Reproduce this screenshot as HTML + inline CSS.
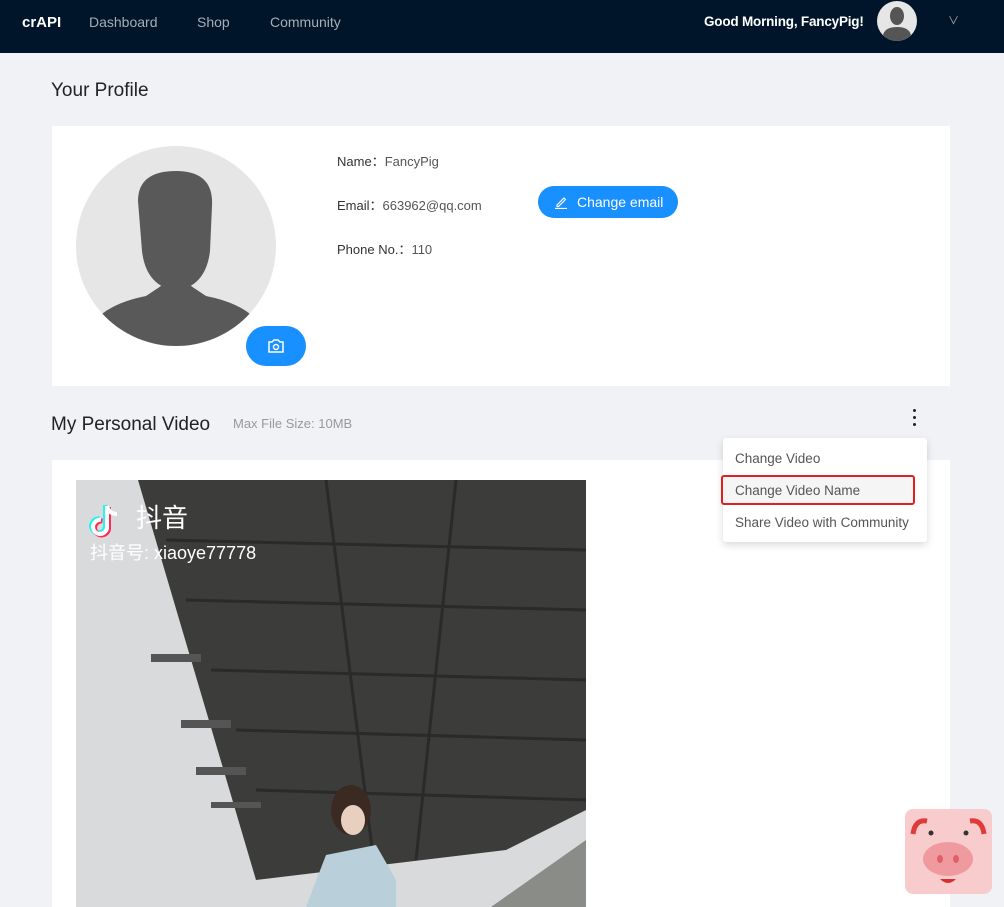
<!DOCTYPE html>
<html><head><meta charset="utf-8"><style>
*{margin:0;padding:0;box-sizing:border-box}
body{width:1004px;height:907px;overflow:hidden;background:#f0f2f5;font-family:"Liberation Sans","Noto Sans CJK SC",sans-serif;position:relative}
.nav{position:absolute;left:0;top:0;width:1004px;height:53px;background:#001529;color:#fff}
.nav span{position:absolute;top:14px;font-size:14px}
.a{position:absolute}
h2{position:absolute;font-size:19px;font-weight:normal;color:#222}
.card{position:absolute;background:#fff}
.lbl{position:absolute;font-size:13px;color:#333}
.lbl b{font-weight:normal;color:#555}
.btn{position:absolute;background:#1890ff;color:#fff;border-radius:16px}
.menu{position:absolute;left:723px;top:438px;width:204px;height:104px;background:#fff;box-shadow:0 3px 8px rgba(0,0,0,.15);border-radius:3px;font-size:13.5px;color:#555}
.menu div{position:absolute;left:12px}
</style></head><body>
<div class="nav">
<span style="left:22px;font-weight:bold;font-size:15px">crAPI</span>
<span style="left:89px;color:#a6adb4">Dashboard</span>
<span style="left:197px;color:#a6adb4">Shop</span>
<span style="left:270px;color:#a6adb4">Community</span>
<span style="left:704px;font-weight:bold;font-size:13.5px;letter-spacing:-0.2px">Good Morning, FancyPig!</span>
<svg class="a" style="left:877px;top:1px" width="40" height="40" viewBox="0 0 40 40"><circle cx="20" cy="20" r="20" fill="#e6e6e6"/><ellipse cx="20" cy="15" rx="7" ry="9" fill="#555"/><path d="M6 34 Q8 26 20 26 Q32 26 34 34 Q28 40 20 40 Q12 40 6 34Z" fill="#555"/></svg>
<span style="left:948px;top:12px;color:#aaa;font-size:11px">∨</span>
</div>
<h2 style="left:51px;top:80px">Your Profile</h2>
<div class="card" style="left:52px;top:126px;width:898px;height:260px"></div>
<svg class="a" style="left:76px;top:146px" width="200" height="200" viewBox="0 0 200 200"><circle cx="100" cy="100" r="100" fill="#e6e6e6"/><clipPath id="c"><circle cx="100" cy="100" r="100"/></clipPath><g clip-path="url(#c)" fill="#595959"><path d="M62 55 Q62 25 100 25 Q138 25 136 60 L134 105 Q130 140 100 145 Q70 140 66 105Z"/><path d="M10 190 Q20 160 70 150 L85 140 L115 140 L130 150 Q180 160 190 190 L190 200 L10 200Z"/></g></svg>
<div class="btn" style="left:246px;top:326px;width:60px;height:40px;border-radius:20px"><svg class="a" style="left:21px;top:12px" width="18" height="16" viewBox="0 0 18 16"><path d="M2 4h3l2-2h4l2 2h3v10H2z" fill="none" stroke="#fff" stroke-width="1.5"/><circle cx="9" cy="9" r="2.5" fill="none" stroke="#fff" stroke-width="1.5"/></svg></div>
<div class="lbl" style="left:337px;top:151px">Name：<b>FancyPig</b></div>
<div class="lbl" style="left:337px;top:195px">Email：<b>663962@qq.com</b></div>
<div class="lbl" style="left:337px;top:239px">Phone No.：<b>110</b></div>
<div class="btn" style="left:538px;top:186px;width:140px;height:32px;font-size:14px"><svg class="a" style="left:16px;top:9px" width="14" height="14" viewBox="0 0 14 14"><path d="M3 10 L10 3 L11.5 4.5 L4.5 11.5 L3 11.5Z M1 13.5h12" fill="none" stroke="#fff" stroke-width="1.2"/></svg><span class="a" style="left:39px;top:8px">Change email</span></div>
<h2 style="left:51px;top:414px">My Personal Video</h2>
<div class="a" style="left:233px;top:416px;font-size:13px;color:#999">Max File Size: 10MB</div>
<div class="a" style="left:913px;top:409px;width:4px;font-size:0"><div style="width:3px;height:3px;background:#222;border-radius:2px;margin-bottom:4px"></div><div style="width:3px;height:3px;background:#222;border-radius:2px;margin-bottom:4px"></div><div style="width:3px;height:3px;background:#222;border-radius:2px"></div></div>
<div class="card" style="left:52px;top:460px;width:898px;height:447px"></div>
<svg class="a" style="left:76px;top:480px" width="510" height="427" viewBox="0 0 510 427">
<rect width="510" height="427" fill="#d9dadc"/>
<path d="M62 0 L510 0 L510 330 L430 370 L180 400 Z" fill="#3c3d3a"/>
<g stroke="#222" stroke-width="3" opacity=".7"><path d="M90 60 L510 70"/><path d="M110 120 L510 130"/><path d="M135 190 L510 200"/><path d="M160 250 L510 260"/><path d="M180 310 L510 320"/><path d="M250 0 L300 400"/><path d="M380 0 L340 380"/></g>
<g fill="#555"><rect x="75" y="174" width="50" height="8"/><rect x="105" y="240" width="50" height="8"/><rect x="120" y="287" width="50" height="8"/><rect x="135" y="322" width="50" height="6"/></g>
<path d="M415 427 L510 360 L510 427Z" fill="#8a8c88"/>
<ellipse cx="275" cy="330" rx="20" ry="25" fill="#3a2a22"/>
<path d="M230 427 L250 375 L300 365 L320 400 L320 427Z" fill="#b9cfd9"/>
<ellipse cx="277" cy="340" rx="12" ry="15" fill="#e8cfc0"/>
<text x="60" y="47" font-size="26" fill="#fff" font-family="Noto Sans CJK SC,sans-serif">抖音</text>
<path d="M31 26 L31 46 A7 7 0 1 1 25 40" fill="none" stroke="#25f4ee" stroke-width="5" transform="translate(-1.5,-1)"/>
<path d="M31 26 L31 46 A7 7 0 1 1 25 40" fill="none" stroke="#fe2c55" stroke-width="5" transform="translate(1.5,1)"/>
<path d="M31 26 L31 46 A7 7 0 1 1 25 40" fill="none" stroke="#fff" stroke-width="4"/>
<path d="M31 26 Q33 34 41 34" fill="none" stroke="#fff" stroke-width="4"/>
<text x="14" y="79" font-size="18" fill="#fff" font-family="Liberation Sans,Noto Sans CJK SC,sans-serif">抖音号: xiaoye77778</text>
</svg>
<div class="menu">
<div style="top:13px">Change Video</div>
<div style="left:-2px;top:37px;width:194px;height:30px;border:2px solid #e02020;border-radius:3px;background:#f5f5f5"></div>
<div style="top:45px">Change Video Name</div>
<div style="top:77px">Share Video with Community</div>
</div>
<svg class="a" style="left:905px;top:809px" width="87" height="85" viewBox="0 0 87 85"><rect width="87" height="85" rx="8" fill="#f8cccc"/><path d="M8 25 Q10 10 22 12" fill="none" stroke="#e03a3a" stroke-width="5"/><path d="M79 25 Q77 10 65 12" fill="none" stroke="#e03a3a" stroke-width="5"/><circle cx="26" cy="24" r="2.5" fill="#333"/><circle cx="61" cy="24" r="2.5" fill="#333"/><ellipse cx="43" cy="50" rx="25" ry="17" fill="#ee9a9e"/><ellipse cx="35" cy="50" rx="3" ry="4" fill="#e0606a"/><ellipse cx="51" cy="50" rx="3" ry="4" fill="#e0606a"/><path d="M35 70 Q43 78 51 70Z" fill="#d83030"/></svg>
</body></html>
